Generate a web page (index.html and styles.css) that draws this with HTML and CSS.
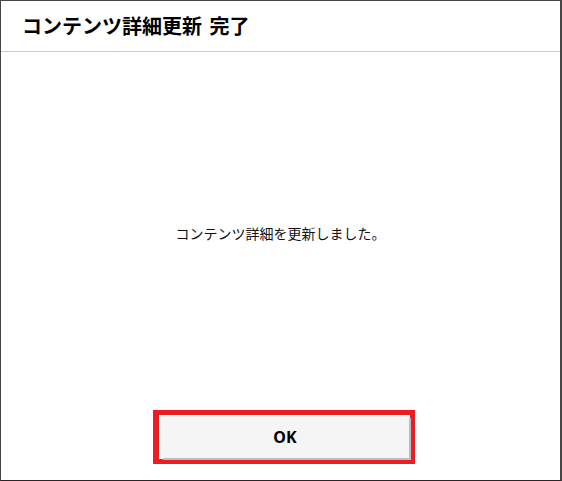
FILE: index.html
```html
<!DOCTYPE html>
<html lang="ja">
<head>
    <meta charset="UTF-8">
    <meta name="viewport" content="width=device-width, initial-scale=1.0">
    <title>コンテンツ詳細更新 完了</title>
    <link rel="stylesheet" href="styles.css">
</head>
<body>
    <div class="dialog">
        <div class="dialog-header">
            <h1>コンテンツ詳細更新 完了</h1>
        </div>
        <div class="dialog-body">
            <p class="message">コンテンツ詳細を更新しました。</p>
        </div>
        <div class="dialog-footer">
            <div class="ok-frame">
                <button class="ok-btn">OK</button>
            </div>
        </div>
    </div>
</body>
</html>
```

FILE: styles.css
```css
body {
    margin: 0;
    padding: 0;
    background-color: #fff;
    font-family: "Noto Sans CJK JP", "Noto Sans", sans-serif;
}

.dialog {
    width: 562px;
    height: 481px;
    box-sizing: border-box;
    border: 1px solid #464646;
    border-right-width: 2px;
    border-bottom-color: #2d2326;
    display: flex;
    flex-direction: column;
    background-color: #fff;
}

.dialog-header {
    height: 50px;
    border-bottom: 1px solid #cccccc;
    padding-left: 21px;
    display: flex;
    align-items: center;
}

.dialog-header h1 {
    margin: 0;
    font-size: 20px;
    font-weight: bold;
    color: #000;
    line-height: 1;
    word-spacing: 3px;
}

.dialog-body {
    height: 362px;
    display: flex;
    align-items: center;
    justify-content: center;
}

.message {
    margin: 0;
    font-size: 14px;
    color: #111;
}

.dialog-footer {
    display: flex;
    justify-content: center;
    padding-left: 7px;
    margin-top: -4px;
}

.ok-frame {
    border: 5px solid #ec1c24;
    border-left-width: 6px;
    padding: 1px 1px 1px 2px;
}

.ok-btn {
    display: block;
    width: 248px;
    height: 42px;
    background-color: #f5f5f5;
    border: none;
    box-shadow: 2px 2px 0 #bdbdbd;
    font-family: "Noto Sans", "Noto Sans CJK JP", sans-serif;
    font-size: 16px;
    font-weight: bold;
    color: #000;
    cursor: pointer;
    padding: 0;
}
```
